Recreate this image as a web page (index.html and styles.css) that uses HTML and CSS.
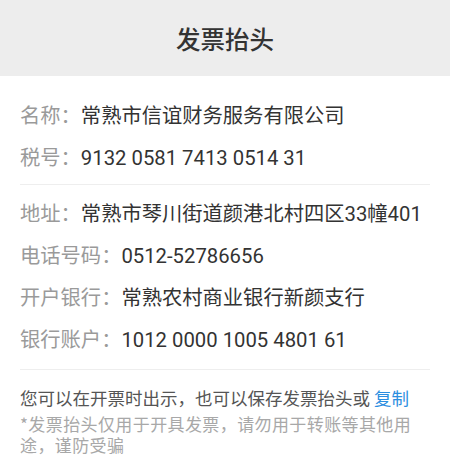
FILE: index.html
```html
<!DOCTYPE html>
<html lang="zh-CN">

<head>
    <meta charset="UTF-8" />
    <meta name="viewport" content="width=device-width, initial-scale=1.0" />
    <title>发票抬头</title>
    <link rel="stylesheet" href="styles.css">
</head>

<body>
    <div class="header">
        <h1>发票抬头</h1>
    </div>

    <div class="section first">
        <div class="row"><span class="label">名称：</span><span class="value">常熟市信谊财务服务有限公司</span></div>
        <div class="row"><span class="label">税号：</span><span class="value">9132 0581 7413 0514 31</span></div>
    </div>

    <div class="section">
        <div class="row"><span class="label">地址：</span><span class="value">常熟市琴川街道颜港北村四区33幢401</span></div>
        <div class="row"><span class="label">电话号码：</span><span class="value">0512-52786656</span></div>
        <div class="row"><span class="label">开户银行：</span><span class="value">常熟农村商业银行新颜支行</span></div>
        <div class="row"><span class="label">银行账户：</span><span class="value">1012 0000 1005 4801 61</span></div>
    </div>

    <div class="footer">
        <p class="tip">您可以在开票时出示，也可以保存发票抬头或 <a class="copy">复制</a></p>
        <p class="warn">*发票抬头仅用于开具发票，请勿用于转账等其他用途，谨防受骗</p>
    </div>
</body>

</html>
```

FILE: styles.css
```css
body {
    margin: 0;
    background-color: #ffffff;
    font-family: "Noto Sans CJK SC", "Noto Sans", sans-serif;
    color: #333333;
}

.header {
    height: 76px;
    background-color: #ededed;
    display: flex;
    justify-content: center;
    align-items: center;
}

h1 {
    margin: 0;
    font-size: 24.5px;
    font-weight: 500;
    color: #333333;
}

.section {
    margin: 0 20px;
    padding: 8px 0;
    border-bottom: 1px solid #eeeeee;
}

.section.first {
    padding: 19px 0 5px;
}

.row {
    display: flex;
    font-family: Roboto, "Noto Sans CJK SC", sans-serif;
    font-size: 20.3px;
    line-height: 42px;
    white-space: nowrap;
}

.row .label {
    color: #9a9a9a;
}

.row .value {
    color: #333333;
}

.footer {
    padding: 16px 20px 0;
}

.footer p {
    margin: 0;
}

.tip {
    font-size: 17.5px;
    line-height: 24px;
    color: #555555;
}

.copy {
    color: #2b8ee0;
    cursor: pointer;
}

.warn {
    margin-top: 3px !important;
    font-size: 17px;
    line-height: 21px;
    color: #a8a8a8;
    letter-spacing: 0.4px;
}
```
